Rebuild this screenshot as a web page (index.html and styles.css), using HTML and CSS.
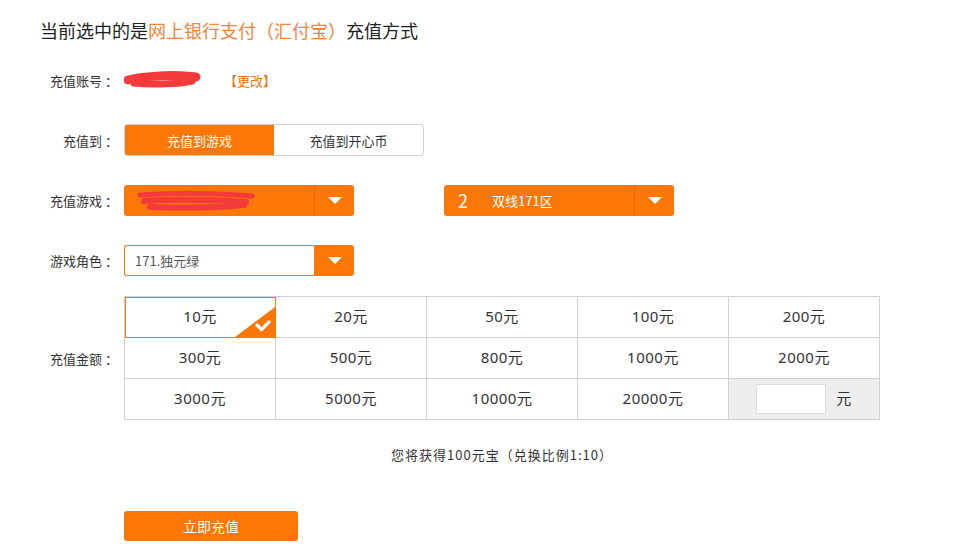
FILE: index.html
```html
<!DOCTYPE html>
<html lang="zh-CN">
<head>
    <meta charset="UTF-8">
    <title>充值</title>
    <link rel="stylesheet" href="styles.css">
</head>
<body>
    <div class="page">
        <h1 class="title">当前选中的是<span class="hl">网上银行支付（汇付宝）</span>充值方式</h1>

        <div class="row">
            <span class="label">充值账号<i>：</i></span>
            <span class="account">
                <svg width="80" height="20" viewBox="0 0 80 20">
                    <path d="M4 10 C20 6 50 4 72 7" stroke="#f43a3a" stroke-width="9" fill="none" stroke-linecap="round"/>
                    <path d="M10 13 C30 15 55 14 68 11" stroke="#f43a3a" stroke-width="7" fill="none" stroke-linecap="round"/>
                </svg>
            </span>
            <a class="change" href="#">【更改】</a>
        </div>

        <div class="row">
            <span class="label">充值到<i>：</i></span>
            <div class="toggle">
                <span class="toggle-item active">充值到游戏</span>
                <span class="toggle-item">充值到开心币</span>
            </div>
        </div>

        <div class="row">
            <span class="label">充值游戏<i>：</i></span>
            <div class="select">
                <span class="select-value">
                    <svg width="120" height="26" viewBox="0 0 120 26">
                        <path d="M4 8 C40 5 80 6 116 9" stroke="#f43a3a" stroke-width="5" fill="none" stroke-linecap="round"/>
                        <path d="M8 14 C40 12 80 13 110 15" stroke="#f43a3a" stroke-width="6" fill="none" stroke-linecap="round"/>
                        <path d="M14 20 C50 21 80 21 108 18" stroke="#f43a3a" stroke-width="6" fill="none" stroke-linecap="round"/>
                    </svg>
                </span>
                <span class="select-arrow"></span>
            </div>
            <div class="select server">
                <span class="select-value"><b class="num">2</b>双线171区</span>
                <span class="select-arrow"></span>
            </div>
        </div>

        <div class="row">
            <span class="label">游戏角色<i>：</i></span>
            <div class="select plain">
                <span class="select-value">171.独元绿</span>
                <span class="select-arrow"></span>
            </div>
        </div>

        <div class="row amount-row">
            <span class="label">充值金额<i>：</i></span>
            <div class="amounts">
                <div class="amount selected">10元
                    <svg class="corner" width="40" height="30" viewBox="0 0 40 30">
                        <path d="M0 30 L40 0 L40 30 Z" fill="#fb7808"/>
                        <path d="M22 18 L26.5 22.5 L34 15" stroke="#fff" stroke-width="3.2" fill="none" stroke-linecap="round" stroke-linejoin="round"/>
                    </svg>
                </div>
                <div class="amount">20元</div>
                <div class="amount">50元</div>
                <div class="amount">100元</div>
                <div class="amount">200元</div>
                <div class="amount">300元</div>
                <div class="amount">500元</div>
                <div class="amount">800元</div>
                <div class="amount">1000元</div>
                <div class="amount">2000元</div>
                <div class="amount">3000元</div>
                <div class="amount">5000元</div>
                <div class="amount">10000元</div>
                <div class="amount">20000元</div>
                <div class="amount custom"><input class="custom-input" type="text"><span>元</span></div>
            </div>
        </div>

        <p class="note">您将获得100元宝（兑换比例1:10）</p>

        <div class="submit-row">
            <button class="submit">立即充值</button>
        </div>
    </div>
</body>
</html>
```

FILE: styles.css
```css
body {
    margin: 0;
    font-family: "Noto Sans CJK SC", "Noto Sans", sans-serif;
    color: #333;
    background: #fff;
}

.page {
    padding: 20px 0 0 40px;
}

.title {
    margin: 0 0 24px;
    font-size: 18px;
    line-height: 20px;
    font-weight: normal;
    color: #222;
}

.title .hl {
    color: #f38439;
}

.row {
    display: flex;
    align-items: center;
    height: 32px;
    margin-bottom: 28px;
    font-size: 13px;
}

.label {
    width: 78px;
    margin-right: 6px;
    text-align: right;
    color: #333;
}

.label i {
    font-style: normal;
    font-family: "Noto Sans CJK TC", sans-serif;
    margin-left: 3px;
}

.account {
    display: flex;
    width: 100px;
}

.change {
    color: #ea7315;
    text-decoration: none;
}

.toggle {
    display: flex;
    width: 298px;
    height: 30px;
    border: 1px solid #d2d2d2;
    border-radius: 3px;
    overflow: hidden;
}

.toggle-item {
    flex: 1;
    display: flex;
    align-items: center;
    justify-content: center;
    color: #333;
}

.toggle-item.active {
    background: #fb7808;
    color: #fff;
}

.select {
    display: flex;
    width: 230px;
    height: 31px;
    background: #fb7808;
    border-radius: 3px;
    color: #fff;
    box-sizing: border-box;
    margin-right: 90px;
}

.select-value {
    flex: 1;
    display: flex;
    align-items: center;
    padding-left: 12px;
    border-right: 1px solid #e86a00;
}

.select-arrow {
    width: 39px;
    display: flex;
    align-items: center;
    justify-content: center;
}

.select-arrow::after {
    content: "";
    border-left: 7px solid transparent;
    border-right: 7px solid transparent;
    border-top: 7px solid #fff;
}

.server .select-value {
    padding-left: 14px;
}

.num {
    font-size: 18px;
    font-weight: normal;
    margin-right: 24px;
}

.select.plain .select-value {
    background: #fff;
    color: #555;
    border: 1px solid #fb7808;
    border-radius: 3px 0 0 3px;
    padding-left: 10px;
}

.amount-row {
    height: auto;
    margin-top: -8px;
    margin-bottom: 0;
}

.amounts {
    display: grid;
    grid-template-columns: repeat(5, 151px);
    border-top: 1px solid #d0d0d0;
    border-left: 1px solid #d0d0d0;
}

.amount {
    position: relative;
    height: 41px;
    box-sizing: border-box;
    padding-bottom: 4px;
    display: flex;
    align-items: center;
    justify-content: center;
    border-right: 1px solid #d0d0d0;
    border-bottom: 1px solid #d0d0d0;
    font-family: "Noto Sans", "Noto Sans CJK SC", sans-serif;
    font-size: 15px;
    letter-spacing: 0.5px;
    color: #333;
}

.amount.selected {
    outline: 1px solid #fb7808;
    outline-offset: -1px;
}

.corner {
    position: absolute;
    right: 0;
    bottom: 0;
}

.amount.custom {
    background: #eee;
    padding-bottom: 0;
}

.custom-input {
    width: 70px;
    height: 30px;
    box-sizing: border-box;
    border: 1px solid #ddd;
    margin: 0 10px 0 0;
    padding: 0 4px;
}

.custom span {
    margin-top: -3px;
}

.note {
    margin: 24px 0 0 84px;
    width: 756px;
    text-align: center;
    font-size: 13px;
    line-height: 22px;
    letter-spacing: 1px;
    color: #333;
}

.submit-row {
    margin: 45px 0 0 84px;
}

.submit {
    width: 174px;
    height: 30px;
    border: none;
    border-radius: 3px;
    background: #fb7808;
    color: #fff;
    font-family: inherit;
    font-size: 14px;
    cursor: pointer;
}
```
